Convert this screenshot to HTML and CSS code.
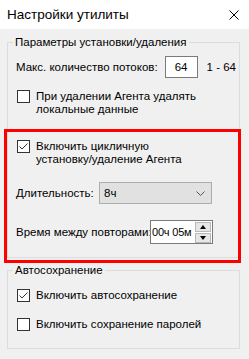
FILE: index.html
```html
<!DOCTYPE html>
<html lang="ru">
<head>
    <meta charset="UTF-8">
    <title>Настройки утилиты</title>
    <link rel="stylesheet" href="styles.css">
</head>
<body>
    <div class="window">
        <div class="titlebar">
            <span class="title">Настройки утилиты</span>
            <svg class="close" width="10" height="10" viewBox="0 0 10 10">
                <path d="M0.5 0.5 L9.5 9.5 M9.5 0.5 L0.5 9.5" stroke="#000" stroke-width="1"/>
            </svg>
        </div>

        <div class="content">
            <fieldset class="group group-install">
                <legend>Параметры установки/удаления</legend>

                <div class="row row-threads">
                    <span>Макс. количество потоков:</span>
                    <div class="num-input">64</div>
                    <span class="range">1 - 64</span>
                </div>

                <label class="check row-delete">
                    <span class="box"></span>
                    <span>При удалении Агента удалять<br>локальные данные</span>
                </label>

                <label class="check row-cycle">
                    <span class="box checked">
                        <svg width="11" height="11" viewBox="0 0 11 11"><path d="M1.5 5.5 L4 8 L9.5 2.5" fill="none" stroke="#333" stroke-width="1"/></svg>
                    </span>
                    <span>Включить цикличную<br>установку/удаление Агента</span>
                </label>

                <div class="row row-duration">
                    <span class="label-duration">Длительность:</span>
                    <div class="select">
                        <span>8ч</span>
                        <svg width="9" height="5" viewBox="0 0 9 5"><path d="M0.5 0.5 L4.5 4.5 L8.5 0.5" fill="none" stroke="#555" stroke-width="1"/></svg>
                    </div>
                </div>

                <div class="row row-interval">
                    <span class="label-interval">Время между повторами:</span>
                    <div class="spin">
                        <span class="spin-value">00ч 05м</span>
                        <div class="spin-btns">
                            <span class="spin-btn"><i class="tri up"></i></span>
                            <span class="spin-btn"><i class="tri down"></i></span>
                        </div>
                    </div>
                </div>
            </fieldset>

            <fieldset class="group group-autosave">
                <legend>Автосохранение</legend>

                <label class="check row-autosave">
                    <span class="box checked">
                        <svg width="11" height="11" viewBox="0 0 11 11"><path d="M1.5 5.5 L4 8 L9.5 2.5" fill="none" stroke="#333" stroke-width="1"/></svg>
                    </span>
                    <span>Включить автосохранение</span>
                </label>

                <label class="check row-passwords">
                    <span class="box"></span>
                    <span>Включить сохранение паролей</span>
                </label>
            </fieldset>
        </div>

        <div class="highlight"></div>
    </div>
</body>
</html>
```

FILE: styles.css
```css
body {
    margin: 0;
    background-color: #f0f0f0;
    font-family: "Liberation Sans", Arial, sans-serif;
    font-size: 11.5px;
    color: #000000;
    white-space: nowrap;
}
.window {
    position: relative;
    width: 249px;
    height: 359px;
    background-color: #f0f0f0;
    overflow: hidden;
}
.titlebar {
    height: 29px;
    background-color: #ffffff;
    display: flex;
    align-items: center;
    justify-content: space-between;
    padding: 0 10px 0 7px;
}
.title {
    font-size: 13.5px;
    line-height: 18px;
}
.close {
    display: block;
}

.content {
    padding: 6px 9px 0 7px;
}
.group {
    margin: 0;
    border: 1px solid #dcdcdc;
    padding: 0 0 0 8px;
    min-width: 0;
}
.group legend {
    padding: 0 2px;
    margin-left: -3px;
    line-height: 15px;
}
.group-install {
    height: 221px;
}
.group-autosave {
    margin-top: 5px;
    height: 84px;
}

.row {
    display: flex;
    align-items: center;
}
.row-threads {
    margin-top: 6px;
    height: 22px;
}
.num-input {
    flex: none;
    width: 31px;
    height: 20px;
    margin-left: 7px;
    border: 1px solid #7a7a7a;
    background-color: #ffffff;
    display: flex;
    align-items: center;
    justify-content: center;
}
.range {
    margin-left: 9px;
}

.check {
    display: flex;
    align-items: flex-start;
    line-height: 13px;
}
.check .box {
    flex: none;
    width: 11px;
    height: 11px;
    margin: 0 6px 0 1px;
    border: 1px solid #333333;
    background-color: #ffffff;
    display: flex;
}
.row-delete {
    margin-top: 12px;
}
.row-cycle {
    margin-top: 24px;
}
.row-duration {
    margin-top: 16px;
    height: 22px;
}
.label-duration {
    flex: none;
    width: 83px;
}
.select {
    flex: none;
    box-sizing: border-box;
    width: 113px;
    height: 22px;
    border: 1px solid #adadad;
    background-color: #e1e1e1;
    display: flex;
    align-items: center;
    justify-content: space-between;
    padding: 0 6px 0 4px;
}
.row-interval {
    margin-top: 16px;
    height: 24px;
}
.label-interval {
    flex: none;
    width: 134px;
}
.spin {
    flex: none;
    width: 63px;
    height: 24px;
    box-sizing: border-box;
    border: 1px solid #7a7a7a;
    background-color: #ffffff;
    display: flex;
    align-items: center;
    padding: 0 1px 0 1px;
}
.spin-value {
    flex: 1;
    font-size: 11px;
    letter-spacing: -0.2px;
}
.spin-btns {
    flex: none;
    display: flex;
    flex-direction: column;
    gap: 1px;
}
.spin-btn {
    width: 14px;
    height: 8px;
    border: 1px solid #b9b9b9;
    background-color: #e6e6e6;
    display: flex;
    align-items: center;
    justify-content: center;
}
.tri {
    width: 0;
    height: 0;
    border-left: 3.5px solid transparent;
    border-right: 3.5px solid transparent;
}
.tri.up {
    border-bottom: 4px solid #000000;
}
.tri.down {
    border-top: 4px solid #000000;
}

.row-autosave {
    margin-top: 11px;
}
.row-passwords {
    margin-top: 16px;
}

.highlight {
    position: absolute;
    left: 4px;
    top: 129px;
    width: 231px;
    height: 128px;
    border: 3px solid #ff0000;
}
```
